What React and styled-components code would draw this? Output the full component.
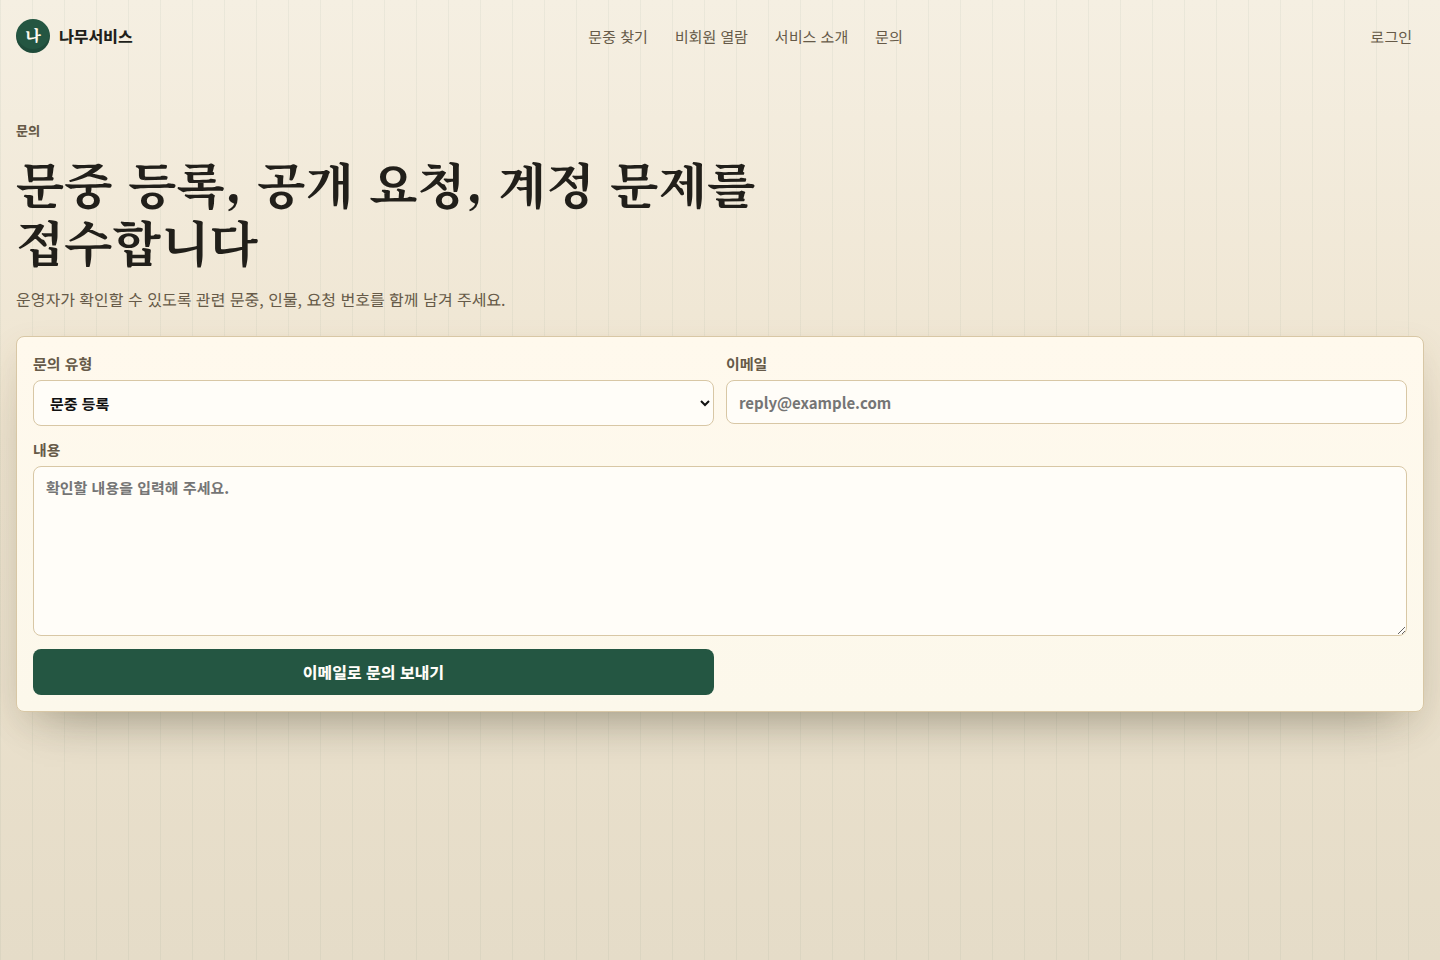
import React from "react";
import styled, { createGlobalStyle } from "styled-components";

const sans = `"Noto Sans KR", "Noto Sans CJK KR", sans-serif`;
const serif = `"Noto Serif KR", "Noto Serif CJK KR", serif`;

const GlobalStyle = createGlobalStyle`
  *, *::before, *::after { box-sizing: border-box; }
  html { background: #e5dcc8; }
  body {
    margin: 0;
    min-height: 100vh;
    color: #211f1a;
    font-family: ${sans};
    font-size: 16px;
    line-height: 24px;
    background:
      repeating-linear-gradient(90deg, rgba(36, 86, 66, 0.05) 0 1px, transparent 1px 32px),
      linear-gradient(180deg, #f5efe2 0%, #eee4d0 45%, #e5dcc8 100%);
  }
`;

const Header = styled.header`
  display: flex;
  align-items: center;
  justify-content: space-between;
  height: 72px;
  padding: 0 16px;
`;
const Brand = styled.a`
  display: inline-flex;
  align-items: center;
  gap: 9px;
  color: #211f1a;
  font-weight: 800;
  text-decoration: none;
`;
const Seal = styled.span`
  display: grid;
  place-items: center;
  width: 34px;
  height: 34px;
  border-radius: 50%;
  background: #245642;
  color: #fffaf0;
  font-family: ${serif};
  font-weight: 800;
  box-shadow: inset 0 -4px 0 rgba(0, 0, 0, 0.12);
`;
const Nav = styled.nav`
  display: flex;
  gap: 27px;
`;
const NavLink = styled.a`
  padding-top: 2px;
  color: #665a48;
  font-size: 15px;
  text-decoration: none;
`;
const Login = styled(NavLink)`
  padding-right: 12px;
  padding-left: 12px;
`;
const Main = styled.main`
  padding: 48px 16px 64px;
`;
const Intro = styled.section`
  max-width: 760px;
`;
const Eyebrow = styled.p`
  margin: 0 0 11px;
  color: #665a48;
  font-size: 13px;
  line-height: 22px;
  font-weight: 800;
`;
const Title = styled.h1`
  margin: 0 0 17px;
  font-family: ${serif};
  font-size: 50px;
  line-height: 58px;
  font-weight: 700;
  word-break: keep-all;
`;
const Lead = styled.p`
  margin: 0;
  color: #665a48;
  line-height: 26px;
`;
const Form = styled.form`
  display: grid;
  grid-template-columns: 1fr 1fr;
  align-items: start;
  gap: 13px 12px;
  margin-top: 24px;
  padding: 16px;
  border: 1px solid #d8c7a5;
  border-radius: 8px;
  background: linear-gradient(180deg, #fff9ed, #fcf8eb);
  box-shadow:
    0 12px 32px rgba(120, 85, 35, 0.1),
    0 28px 48px -28px rgba(36, 44, 34, 0.42);
`;
const Field = styled.label`
  display: grid;
  gap: 5px;
  grid-column: ${(p) => (p.$wide ? "1 / -1" : "auto")};
  color: #665a48;
  font-size: 15px;
  line-height: 22px;
  font-weight: 700;
`;
const control = `
  width: 100%;
  border: 1px solid #d8c7a5;
  border-radius: 8px;
  background: #fffdf8;
  color: #111;
  font: inherit;
`;
const Select = styled.select`
  ${control}
  height: 46px;
  padding: 0 12px;
`;
const Input = styled.input`
  ${control}
  height: 44px;
  padding: 0 12px;
`;
const TextArea = styled.textarea`
  ${control}
  display: block;
  height: 170px;
  padding: 10px 12px;
  resize: vertical;
`;
const Submit = styled.button`
  height: 46px;
  border: 0;
  border-radius: 8px;
  background: #245642;
  color: #fffdf8;
  font: inherit;
  font-weight: 800;
`;

export default function App() {
  return (
    <div lang="ko">
      <GlobalStyle />
      <Header>
        <Brand href="#"><Seal>나</Seal>나무서비스</Brand>
        <Nav>
          <NavLink href="#">문중 찾기</NavLink>
          <NavLink href="#">비회원 열람</NavLink>
          <NavLink href="#">서비스 소개</NavLink>
          <NavLink href="#">문의</NavLink>
        </Nav>
        <Login href="#">로그인</Login>
      </Header>
      <Main>
        <Intro>
          <Eyebrow>문의</Eyebrow>
          <Title>문중 등록, 공개 요청, 계정 문제를 접수합니다</Title>
          <Lead>운영자가 확인할 수 있도록 관련 문중, 인물, 요청 번호를 함께 남겨 주세요.</Lead>
        </Intro>
        <Form>
          <Field>문의 유형
            <Select><option>문중 등록</option></Select>
          </Field>
          <Field>이메일
            <Input type="email" placeholder="reply@example.com" />
          </Field>
          <Field $wide>내용
            <TextArea placeholder="확인할 내용을 입력해 주세요." />
          </Field>
          <Submit type="button">이메일로 문의 보내기</Submit>
        </Form>
      </Main>
    </div>
  );
}
